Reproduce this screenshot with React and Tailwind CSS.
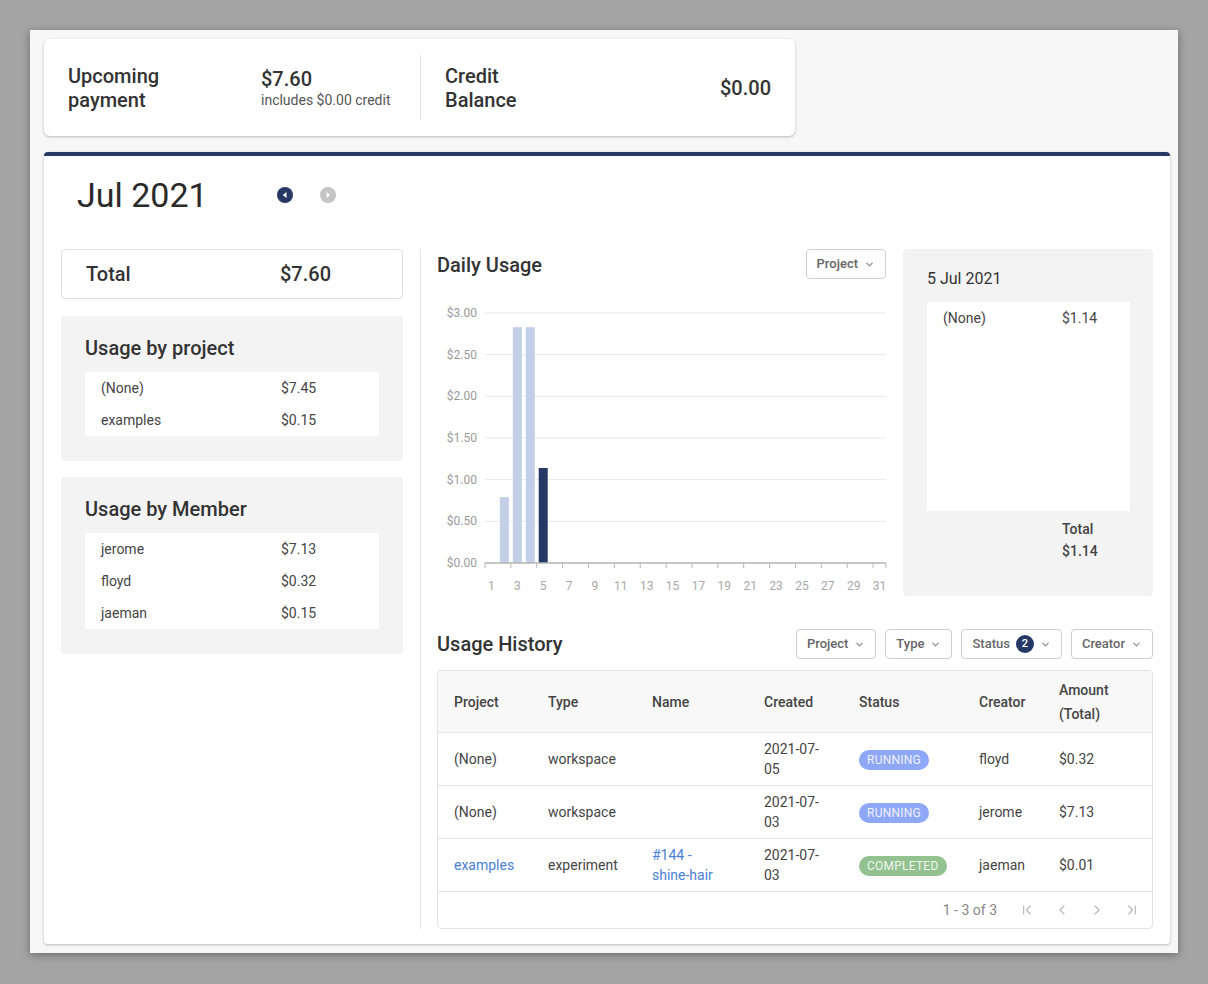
import React from 'react';
import { ChevronDown, ChevronFirst, ChevronLast, ChevronLeft, ChevronRight } from 'lucide-react';

const byProject = [
  { name: '(None)', amount: '$7.45' },
  { name: 'examples', amount: '$0.15' },
];

const byMember = [
  { name: 'jerome', amount: '$7.13' },
  { name: 'floyd', amount: '$0.32' },
  { name: 'jaeman', amount: '$0.15' },
];

const daily = { 2: 0.79, 3: 2.83, 4: 2.83, 5: 1.14 };

const rows = [
  { project: '(None)', type: 'workspace', name: null, created: ['2021-07-', '05'], status: 'RUNNING', creator: 'floyd', amount: '$0.32' },
  { project: '(None)', type: 'workspace', name: null, created: ['2021-07-', '03'], status: 'RUNNING', creator: 'jerome', amount: '$7.13' },
  { project: 'examples', type: 'experiment', name: ['#144 -', 'shine-hair'], created: ['2021-07-', '03'], status: 'COMPLETED', creator: 'jaeman', amount: '$0.01', link: true },
];

const FilterButton = ({ label, badge }) => (
  <button className="h-[30px] px-[10px] flex items-center gap-[6px] border border-[#cfcfcf] rounded-[4px] bg-white text-[13px] font-medium text-[#666]">
    {label}
    {badge && (
      <span className="w-[18px] h-[18px] rounded-full bg-[#263866] text-white text-[11px] flex items-center justify-center">{badge}</span>
    )}
    <ChevronDown size={11} strokeWidth={2.5} className="text-[#888]" />
  </button>
);

const ListBox = ({ title, items }) => (
  <div className="bg-[#f3f3f3] rounded-[4px] px-[24px] pt-[20px] pb-[25px]">
    <h3 className="text-[20px] leading-[24px] font-medium text-[#333] mb-[12px]">{title}</h3>
    <div className="bg-white">
      {items.map(it => (
        <div key={it.name} className="h-[32px] flex items-center text-[14px] text-[#444]">
          <span className="w-[196px] pl-[16px]">{it.name}</span>
          <span>{it.amount}</span>
        </div>
      ))}
    </div>
  </div>
);

const CircleArrow = ({ dir, color }) => (
  <svg width="16" height="16" viewBox="0 0 16 16">
    <circle cx="8" cy="8" r="8" fill={color} />
    {dir === 'left'
      ? <path d="M9.5 5 L5.8 8 L9.5 11 Z" fill="white" />
      : <path d="M6.5 5 L10.2 8 L6.5 11 Z" fill="white" />}
  </svg>
);

const Chart = () => {
  const x0 = 48;
  const dayW = 12.935;
  const base = 263;
  const perDollar = 83.33;
  const yLabels = ['$3.00', '$2.50', '$2.00', '$1.50', '$1.00', '$0.50', '$0.00'];
  const days = Array.from({ length: 31 }, (_, i) => i + 1);
  return (
    <svg width="453" height="296" viewBox="0 0 453 296" className="block">
      {yLabels.map((l, i) => {
        const y = 13 + i * 41.67;
        return (
          <g key={l}>
            <text x="40" y={y + 4} textAnchor="end" fontSize="12" fill="#9a9a9a" fontFamily="Roboto, sans-serif">{l}</text>
            {i < 6 && <line x1={x0} x2="449" y1={y} y2={y} stroke="#e8e8e8" strokeWidth="1" />}
          </g>
        );
      })}
      {Object.entries(daily).map(([d, v]) => {
        const cx = x0 + (Number(d) - 0.5) * dayW;
        const h = v * perDollar;
        return <rect key={d} x={cx - 4.5} y={base - h} width="9" height={h} fill={d === '5' ? '#263866' : '#c3cfe7'} />;
      })}
      <line x1={x0} x2="449" y1={base} y2={base} stroke="#b5b5b5" strokeWidth="1.5" />
      {days.filter(d => d % 2 === 1).map(d => {
        const tx = x0 + (d - 1) * dayW;
        return <line key={'t' + d} x1={tx} x2={tx} y1={base} y2={base + 5} stroke="#b5b5b5" strokeWidth="1" />;
      })}
      <line x1={x0 + 31 * dayW} x2={x0 + 31 * dayW} y1={base} y2={base + 5} stroke="#b5b5b5" strokeWidth="1" />
      {days.filter(d => d % 2 === 1).map(d => (
        <text key={'l' + d} x={x0 + (d - 0.5) * dayW} y="290" textAnchor="middle" fontSize="12" fill="#a8a8a8" fontFamily="Roboto, sans-serif">{d}</text>
      ))}
    </svg>
  );
};

const StatusBadge = ({ status }) => (
  <span className={`inline-flex items-center h-[20px] px-[8px] rounded-full text-[12px] tracking-[0.02em] ${status === 'RUNNING' ? 'bg-[#8ea7f7] text-[#eef1ff]' : 'bg-[#93c190] text-[#eef7ed]'}`}>
    {status}
  </span>
);

const cols = 'grid grid-cols-[94px_104px_112px_95px_120px_80px_1fr]';

export default function App() {
  return (
    <div className="w-[1208px] h-[984px] bg-[#a4a4a4] pt-[30px] pl-[30px]" style={{ fontFamily: 'Roboto, "Liberation Sans", sans-serif' }}>
      <div className="w-[1148px] h-[923px] bg-[#f7f7f7] shadow-[0_2px_8px_rgba(0,0,0,0.35)] pl-[14px] pt-[9px]">
        {/* Payment summary */}
        <div className="w-[751px] h-[97px] bg-white rounded-[6px] shadow-[0_1px_3px_rgba(0,0,0,0.25)] flex items-center px-[24px]">
          <div className="w-[193px] text-[20px] leading-[24px] font-medium text-[#333]">Upcoming<br />payment</div>
          <div className="w-[159px]">
            <div className="text-[20px] leading-[24px] font-medium text-[#333]">$7.60</div>
            <div className="text-[14px] leading-[18px] text-[#555]">includes $0.00 credit</div>
          </div>
          <div className="w-px h-[65px] bg-[#e2e2e2]" />
          <div className="flex-1 flex items-center justify-between pl-[24px]">
            <div className="text-[20px] leading-[24px] font-medium text-[#333]">Credit<br />Balance</div>
            <div className="text-[20px] font-medium text-[#333]">$0.00</div>
          </div>
        </div>

        {/* Monthly usage */}
        <div className="mt-[16px] w-[1126px] h-[792px] bg-white border-t-4 border-[#263866] rounded-[4px] shadow-[0_1px_3px_rgba(0,0,0,0.25)] px-[17px]">
          <div className="flex items-center pt-[19px] h-[59px]">
            <h1 className="w-[216px] pl-[16px] text-[34px] leading-[40px] text-[#2a2a2a]">Jul 2021</h1>
            <CircleArrow dir="left" color="#263866" />
            <div className="w-[27px]" />
            <CircleArrow dir="right" color="#c4c4c4" />
          </div>

          <div className="flex mt-[34px]">
            {/* Left column */}
            <div className="w-[342px] flex flex-col gap-[16px]">
              <div className="h-[50px] border border-[#e0e0e0] rounded-[4px] flex items-center px-[24px] text-[20px] font-medium text-[#333] mb-[1px]">
                <span className="w-[194px]">Total</span>
                <span>$7.60</span>
              </div>
              <ListBox title="Usage by project" items={byProject} />
              <ListBox title="Usage by Member" items={byMember} />
            </div>

            <div className="ml-[17px] mr-[16px] w-px bg-[#e4e4e4] self-stretch" />

            {/* Middle column */}
            <div className="w-[716px]">
              <div className="flex gap-[17px]">
                <div className="w-[449px]">
                  <div className="flex items-center justify-between h-[30px]">
                    <h2 className="text-[20px] font-medium text-[#333] pt-[2px]">Daily Usage</h2>
                    <FilterButton label="Project" />
                  </div>
                  <div className="mt-[21px]">
                    <Chart />
                  </div>
                </div>
                <div className="w-[250px] h-[347px] bg-[#f3f3f3] rounded-[4px] px-[24px] pt-[19px]">
                  <div className="text-[16px] leading-[22px] text-[#333]">5 Jul 2021</div>
                  <div className="mt-[12px] w-[203px] h-[209px] bg-white pt-[6px]">
                    <div className="flex items-center text-[14px] text-[#444] h-[20px]">
                      <span className="w-[135px] pl-[16px]">(None)</span>
                      <span>$1.14</span>
                    </div>
                  </div>
                  <div className="pl-[135px] mt-[7px] text-[14px] leading-[22px] font-medium text-[#444]">
                    <div>Total</div>
                    <div>$1.14</div>
                  </div>
                </div>
              </div>

              <div className="mt-[33px] h-[30px] flex items-center justify-between">
                <h2 className="text-[20px] leading-[28px] font-medium text-[#333]">Usage History</h2>
                <div className="flex gap-[9px]">
                  <FilterButton label="Project" />
                  <FilterButton label="Type" />
                  <FilterButton label="Status" badge="2" />
                  <FilterButton label="Creator" />
                </div>
              </div>

              <div className="mt-[11px] border border-[#e3e3e3] rounded-[4px] overflow-hidden">
                <div className={`${cols} h-[62px] items-center bg-[#f8f8f8] border-b border-[#e3e3e3] text-[14px] leading-[24px] font-medium text-[#444]`}>
                  <div className="pl-[16px]">Project</div>
                  <div className="pl-[16px]">Type</div>
                  <div className="pl-[16px]">Name</div>
                  <div className="pl-[16px]">Created</div>
                  <div className="pl-[16px]">Status</div>
                  <div className="pl-[16px]">Creator</div>
                  <div className="pl-[16px]">Amount<br />(Total)</div>
                </div>
                {rows.map((r, i) => (
                  <div key={i} className={`${cols} h-[53px] items-center border-b border-[#e3e3e3] text-[14px] leading-[20px] text-[#444]`}>
                    <div className={`pl-[16px] ${r.link ? 'text-[#4a7fd6]' : ''}`}>{r.project}</div>
                    <div className="pl-[16px]">{r.type}</div>
                    <div className="pl-[16px] text-[#4a7fd6]">{r.name && <>{r.name[0]}<br />{r.name[1]}</>}</div>
                    <div className="pl-[16px]">{r.created[0]}<br />{r.created[1]}</div>
                    <div className="pl-[16px]"><StatusBadge status={r.status} /></div>
                    <div className="pl-[16px]">{r.creator}</div>
                    <div className="pl-[16px]">{r.amount}</div>
                  </div>
                ))}
                <div className="h-[36px] flex items-center justify-end pr-[12px] text-[14px] text-[#888]">
                  <span className="mr-[22px]">1 - 3 of 3</span>
                  <div className="flex gap-[19px] text-[#b8b8b8]">
                    <ChevronFirst size={16} strokeWidth={1.75} />
                    <ChevronLeft size={16} strokeWidth={1.75} />
                    <ChevronRight size={16} strokeWidth={1.75} />
                    <ChevronLast size={16} strokeWidth={1.75} />
                  </div>
                </div>
              </div>
            </div>
          </div>
        </div>
      </div>
    </div>
  );
}
